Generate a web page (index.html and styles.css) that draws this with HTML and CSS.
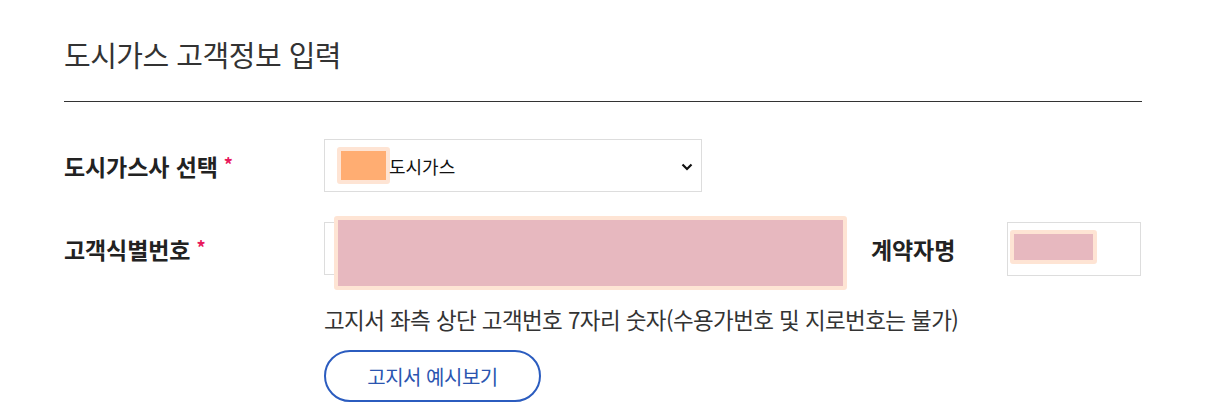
FILE: index.html
```html
<!DOCTYPE html>
<html lang="ko">
<head>
<meta charset="utf-8">
<title>도시가스 고객정보 입력</title>
<link rel="stylesheet" href="styles.css">
</head>
<body>
<div class="wrap">
  <h2 class="title">도시가스 고객정보 입력</h2>
  <div class="form">
    <div class="row">
      <div class="label">도시가스사 선택<span class="req">*</span></div>
      <div class="select">
        <span class="mask mask-orange"></span>
        <span class="select-text">도시가스</span>
        <svg class="chev" width="12" height="8" viewBox="0 0 12 8"><path d="M1.5 1.5 L6 6 L10.5 1.5" fill="none" stroke="#111" stroke-width="2.2"/></svg>
      </div>
    </div>
    <div class="row">
      <div class="label">고객식별번호<span class="req">*</span></div>
      <div class="input-main">
        <span class="mask mask-pink mask-big"></span>
      </div>
      <div class="label label-sub">계약자명</div>
      <div class="input-name">
        <span class="mask mask-pink mask-small"></span>
      </div>
    </div>
    <div class="help">
      <p class="hint">고지서 좌측 상단 고객번호 7자리 숫자(수용가번호 및 지로번호는 불가)</p>
      <button class="btn-example" type="button">고지서 예시보기</button>
    </div>
  </div>
</div>
</body>
</html>
```
FILE: styles.css
```css
* { box-sizing: border-box; }
body {
  margin: 0;
  background: #fff;
  font-family: "Noto Sans CJK KR", "Noto Sans", sans-serif;
  color: #333;
}
.wrap {
  margin-left: 64px;
  width: 1078px;
}
.title {
  margin: 0;
  padding-top: 34px;
  padding-bottom: 27px;
  font-size: 29px;
  line-height: 40px;
  font-weight: 400;
  color: #333;
  letter-spacing: -0.5px;
  border-bottom: 1px solid #333;
}
.form {
  padding-top: 37px;
}
.row {
  display: flex;
  align-items: center;
  height: 53px;
  margin-bottom: 30px;
}
.label {
  width: 260px;
  flex: none;
  font-size: 23px;
  font-weight: 700;
  color: #222;
  letter-spacing: -0.1px;
}
.req {
  color: #e8185c;
  font-size: 18px;
  vertical-align: 4px;
  margin-left: 6px;
}
.select {
  position: relative;
  width: 378px;
  height: 53px;
  border: 1px solid #ddd;
  display: flex;
  align-items: center;
  padding-left: 12px;
}
.select-text {
  font-size: 18px;
  color: #111;
  margin-left: -1px;
}
.chev {
  position: absolute;
  right: 8px;
  top: 23px;
}
.mask {
  display: block;
  border: 4px solid #fee4d4;
  border-radius: 3px;
}
.mask-orange {
  width: 53px;
  height: 37px;
  background: #ffad72;
}
.input-main {
  position: relative;
  width: 522px;
  height: 53px;
  border: 1px solid #ddd;
  flex: none;
}
.mask-big {
  position: absolute;
  left: 9px;
  top: -7px;
  width: 513px;
  height: 74px;
  background: #e7b8bf;
}
.label-sub {
  width: 136px;
  margin-left: 25px;
}
.input-name {
  width: 134px;
  height: 54px;
  border: 1px solid #ddd;
  padding: 7px 0 0 2px;
}
.mask-small {
  width: 87px;
  height: 34px;
  background: #e7b8bf;
}
.help {
  padding-left: 260px;
  margin-top: -2px;
}
.hint {
  margin: 0;
  font-size: 22.5px;
  line-height: 32px;
  color: #333;
  letter-spacing: -0.6px;
}
.btn-example {
  display: block;
  margin-top: 15px;
  width: 217px;
  height: 52px;
  border: 2px solid #2b5cbf;
  border-radius: 26px;
  background: #fff;
  color: #2b55b0;
  font-family: "Noto Sans CJK KR", "Noto Sans", sans-serif;
  font-size: 20px;
  letter-spacing: -0.5px;
  padding: 0;
  cursor: pointer;
}
```
